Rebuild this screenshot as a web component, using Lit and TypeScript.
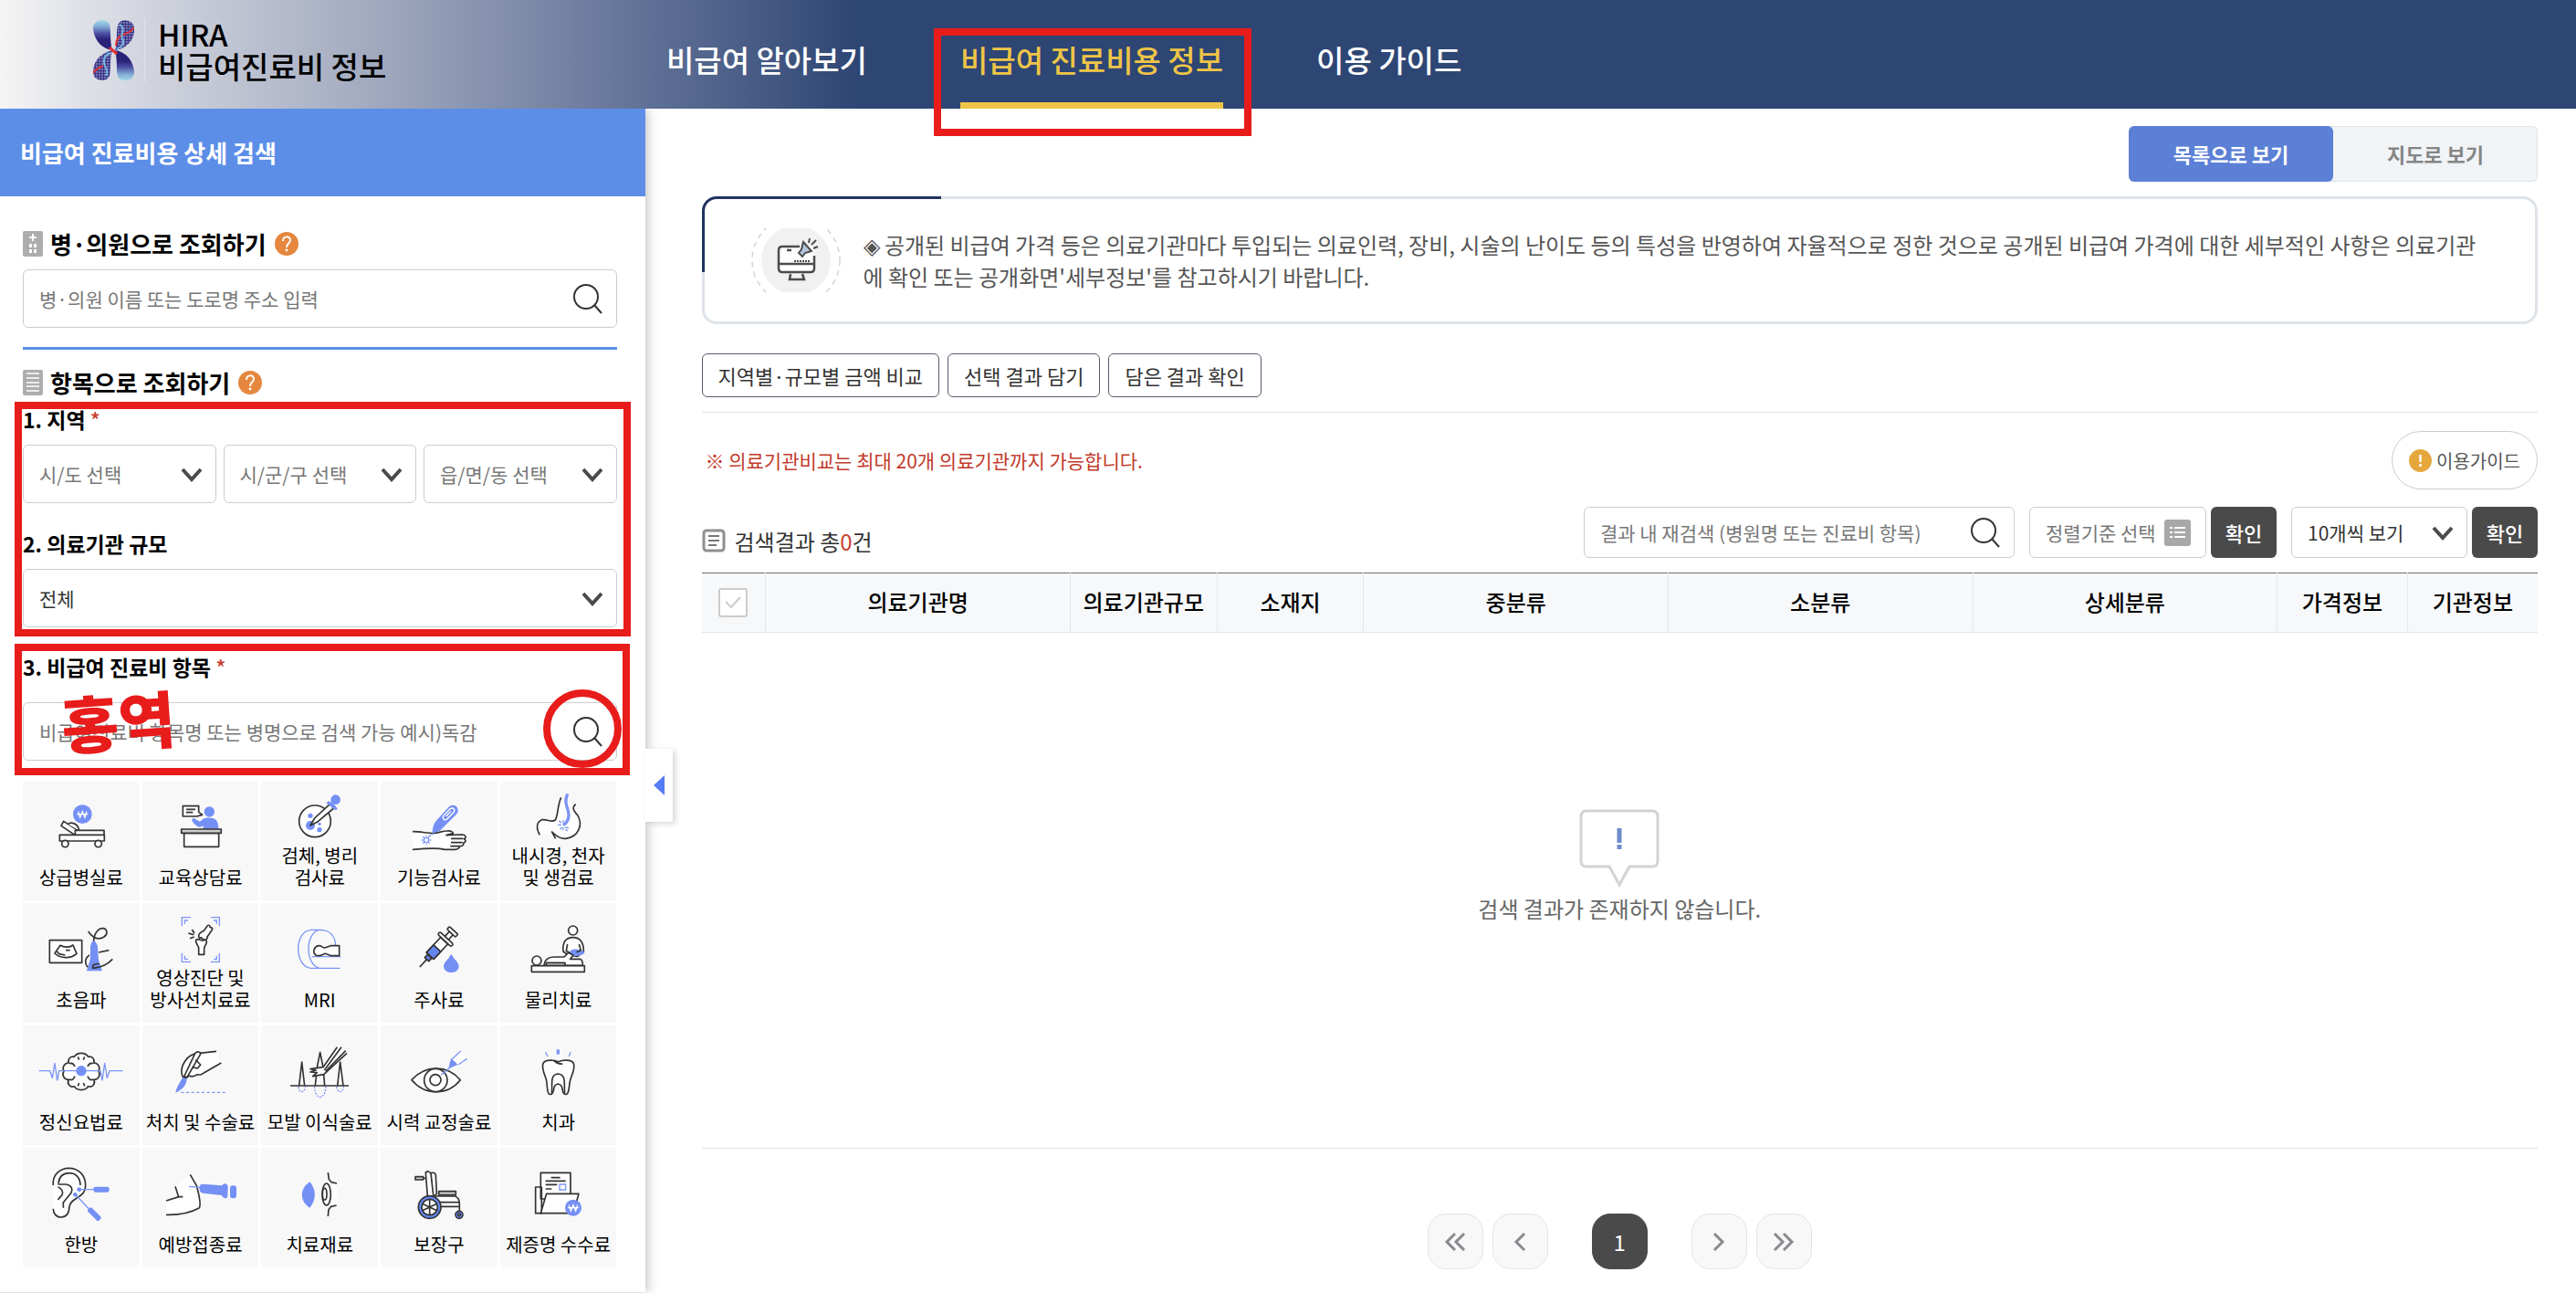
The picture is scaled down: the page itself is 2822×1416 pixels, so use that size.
import { LitElement, html, svg, css } from "lit";
import { customElement, property, state } from "lit/decorators.js";
import { classMap } from "lit/directives/class-map.js";

const won = (x: number, y: number, r: number) => svg`
  <circle class="b" cx=${x} cy=${y} r=${r} />
  <path class="w" transform="translate(${x} ${y})" d="M-14-9l6 19 8-19 8 19 6-19M-18 0h36" />`;

interface Category {
  label: string[];
  box: string;
  art: unknown;
}

const categories: Category[] = [
  {
    label: ["상급병실료"],
    box: "121 105 288 180",
    art: svg`${won(269, 155, 31)}
      <path class="s" d="M207 178l-8 15 46 31 10-15z" /><path class="s" d="M222 188c8-9 32-4 36 20" />
      <path class="s" d="M245 208h95v15h-95zM194 223h147v20H194z" />
      <circle class="s" cx="212" cy="252" r="11" /><circle class="s" cx="321" cy="252" r="11" />`,
  },
  {
    label: ["교육상담료"],
    box: "513 105 288 180",
    art: svg`<path class="s" d="M598 128h52v20l12 9-18 5h-46z" /><path class="s" d="M609 139h30M609 149h22" />
      <circle class="b" cx="685" cy="147" r="17" />
      <path class="b" d="M665 203v-10l-12 5c-12-4-22-14-26-24l5-7 22 12 10-8c12-6 32-6 42 2 8 6 9 20 9 30z" />
      <path class="s" d="M602 217h114v45H602z" /><path class="s g" d="M593 204h131v13H593z" />`,
  },
  {
    label: ["검체, 병리", "검사료"],
    box: "906 69 288 180",
    art: svg`<circle class="s" cx="1035" cy="178" r="52" />
      <circle class="b" cx="1020" cy="160" r="8" /><circle class="b" cx="1020" cy="192" r="15" />
      <circle class="b" cx="1050" cy="187" r="5" /><circle class="b" cx="1050" cy="206" r="8" />
      <path class="s" d="M1020 192l14-24 50-46 13 13-52 44z" />
      <path class="b" d="M1072 118l8-6 11 5 10 9 9 12-8 4z" /><circle class="b" cx="1103" cy="107" r="16" />`,
  },
  {
    label: ["기능검사료"],
    box: "187 105 288 180",
    art: svg`<path class="s" d="M244 212c25 0 45 5 66 6 22-1 30-8 46-8 12-2 22 3 21 8l-22 6 52-2c14 2 14 12 6 14 8 4 6 12-2 13 2 8-4 11-12 11-2 8-8 11-16 11h-34c-20-6-60-4-105 0" />
      <path class="s" d="M370 235h40M370 248h38M368 260h30" />
      <path class="b" d="M309 218c0-22 6-33 14-43l42-46c12-9 29-2 28 14 0 6-3 10-6 13l-50 50c-6 5-14 8-22 9l-9 9z" />
      <path class="w" d="M346 160l20-22c12-8 20 2 12 12l-20 20c-10 8-18-2-12-10zM354 162l16-17" />
      <circle class="bl" cx="289" cy="240" r="8" />
      <path class="bl" d="M289 224v5M289 251v5M273 240h5M300 240h5M278 229l4 4M296 247l4 4M278 251l4-4M304 222l-10 12" />`,
  },
  {
    label: ["내시경, 천자", "및 생검료"],
    box: "579 69 288 180",
    art: svg`<path class="f" d="M728 110l46 12c0 30 20 40 20 70-2 30-30 44-50 44l-40-16-46 0c-10-36 4-50 30-46 20 6 36 6 40-64z" />
      <path class="n" d="M731 100c-13 30-9 56-19 74-14 10-26-4-44-1-18 7-20 28-7 50" />
      <path class="n" d="M779 122c-14 12-6 22 6 36 18 30 6 70-38 77-16 2-30-6-46-22l12 22" />
      <path class="bt" d="M752 88c-10 25-4 35 2 55 5 20 0 38-16 48" />
      <path class="bl" d="M738 174v10M738 198v10M720 190h12M744 198l12 2M724 176l8 8M728 204l6-6M746 204l6 6" />`,
  },
  {
    label: ["초음파"],
    box: "121 507 288 180",
    art: svg`<path class="s" d="M161 569h106v74H161z" />
      <path class="s" d="M196 586c14 8 32 7 42-1l12 28c-20 18-54 17-72-1zM186 606l6 8 20 4M214 602h14" />
      <path class="b" d="M283 670c4-20 12-30 12-48v-34q10-34 24 0l2 36c0 16 10 28 12 46z" />
      <path class="n" d="M306 572c0-24 15-44 32-42 14 3 14 20 2 28-20 12-38 2-52-18" />
      <path class="n" d="M322 609l34-7M368 631c-18 18-32 26-64 30-6-10 8-16 20-14M292 618c-16 10-16 28-6 40" />`,
  },
  {
    label: ["영상진단 및", "방사선치료료"],
    box: "513 471 288 180",
    art: svg`<path class="bl" d="M595 523v-29h29M690 494h28v29M718 611v29h-28M624 640h-29v-29M604 515v-11h11M699 504h10v11M709 620v11h-10M615 631h-11v-11" />
      <path class="s" d="M650 555c0-12 12-14 17-17l10-14c2-6 10-6 10 2 8 0 10 6 5 12l-14 20c2 12-14 12-20 2-4 4-8 0-8-5z" />
      <path class="s" d="M641 568c8-6 14 2 20 2 8 0 16-6 15 6-2 10-8 12-8 20v20h-18v-22c-2-10-12-16-9-26z" />
      <path class="n" d="M616 546l18 5M628 534l8 12M621 563l14-5" />`,
  },
  {
    label: ["MRI"],
    box: "906 507 288 180",
    art: svg`<path class="bl" d="M1022 535c-56 4-56 120 0 126h95M1022 535h28c34 0 52 20 53 52M1050 535c-46 8-50 112 0 126M1025 623h95" />
      <path class="s" d="M1038 618c-12-10-6-28 9-31 9-1 13 7 20 7l20-7h28v33h-26l-20-7c-10 2-16 12-31 5z" />`,
  },
  {
    label: ["주사료"],
    box: "187 507 288 180",
    art: svg`<g transform="translate(326 594) rotate(43)">
        <path class="n" d="M0 52v34" /><path class="s" d="M-8-66H8v26H-8z" />
        <rect class="s" x="-19" y="-78" width="38" height="12" rx="4" />
        <path class="s" d="M-16-32h32v68h-32z" /><path class="s p" d="M-16 2h32v34h-32z" />
        <rect class="s" x="-30" y="-44" width="60" height="11" rx="5" />
        <path class="s p" d="M-9 38H9v14H-9z" /></g>
      <path class="b" d="M371 614c10 20 25 26 25 42a25 19 0 0 1-50 0c0-16 15-22 25-42z" />`,
  },
  {
    label: ["물리치료"],
    box: "579 507 288 180",
    art: svg`<circle class="s" cx="770" cy="537" r="15" />
      <path class="s" d="M738 606c-3-30 8-46 32-46s36 16 35 48l-20 14-30-4z" />
      <path class="b" d="M762 603c16-8 34-4 46 6-2 10-30 14-56 12z" />
      <path class="s" d="M675 652c2-20 14-28 32-28h34l14-14 16 8-10 13h32q10 4 9 21z" />
      <path class="n" d="M752 582l-4 22 14 8M790 582l6 20-14 6" /><path class="s g" d="M682 643h62v10h-62z" />
      <circle class="s" cx="651" cy="636" r="15" /><path class="s" d="M634 653h174v20H634z" />`,
  },
  {
    label: ["정신요법료"],
    box: "121 69 288 180",
    art: svg`<path class="s" d="M224 132a15 15 0 0 1 18-20a26 22 0 0 1 46 0a15 15 0 0 1 18 20a18 18 0 0 1 16 27a18 18 0 0 1-16 28a15 15 0 0 1-18 22a26 22 0 0 1-46 0a15 15 0 0 1-18-22a18 18 0 0 1-16-28a18 18 0 0 1 16-27z" />
      <path class="n" d="M254 112l4 10M276 112l-4 10M254 208l4-10M276 208l-4-10M226 134q12-4 18 10M304 134q-12-4-18 10M226 186q12 6 18-10M304 186q-12 6-18-10" />
      <path class="bl" d="M126 158h36l8 24 8-50 8 58 6-32h136l6 32 8-58 8 50 8-24h44" />
      <circle class="b" cx="265" cy="158" r="17" />`,
  },
  {
    label: ["처치 및 수술료"],
    box: "513 69 288 180",
    art: svg`<path class="f" d="M600 176c-10-40 20-76 50-80l58-2 16 38-60 34z" />
      <path class="n" d="M708 94l-56 6c-40 0-66 44-56 74 4 12 16 8 22 0 12 6 22 0 28-4 12 4 18-4 22-6l56-32" />
      <path class="s" d="M602 177l36-76c6-8 18-6 18 2l-44 76z" /><path class="n" d="M640 122l16 16-10 12-18-4" />
      <path class="b" d="M574 230c2-14 12-30 23-50l14 4c0 18-12 36-37 46z" />
      <path class="bl" stroke-dasharray="9 8" d="M592 229h150" />`,
  },
  {
    label: ["모발 이식술료"],
    box: "906 69 288 180",
    art: svg`<path class="n" d="M954 207h192M983 207l9-78 9 78M1036 207l6-60 10-50 10 50 5 60M1109 207l9-78 10 78" />
      <path class="s" d="M1108 80l-46 66-42 6 18 4-18 6 22 2-14 12 36-6 76-70" />
      <path class="n" d="M1122 80l-56 76M1136 92l-66 68" />
      <path class="bl" stroke-dasharray="6 4" d="M981 210c0 22 22 22 22 0M1034 210c0 46 36 46 36 0M1107 210c0 22 22 22 22 0" />`,
  },
  {
    label: ["시력 교정술료"],
    box: "187 69 288 180",
    art: svg`<path class="s" d="M241 188c44-50 118-50 160 0-42 52-116 52-160 0z" />
      <circle class="s" cx="320" cy="189" r="38" /><circle class="s" cx="319" cy="188" r="18" />
      <path class="bl" d="M338 172l32-28" /><path class="b" d="M362 151l8-34 24 20z" />
      <path class="f" d="M376 117l26-24 22 25-30 22z" /><path class="bl" d="M374 119l28-26M394 138l29-20" />`,
  },
  {
    label: ["치과"],
    box: "579 69 288 180",
    art: svg`<path class="s" d="M722 128c-14-6-42-8-50 5-6 16 4 36 10 52 4 18 2 36 8 48 8 6 14 0 16-10 2-14 4-20 15-22 11 2 13 8 15 22 2 10 8 16 16 10 8-14 4-30 10-48 6-16 16-36 10-52-8-13-36-11-50-5z" />
      <path class="n" d="M700 232c4-24-8-62 21-64 30 2 18 40 22 64M708 125c8 8 18 12 28 10" />
      <path class="bt" d="M721 88v16" /><path class="bl" d="M680 97l7 14M763 97l-7 14" />`,
  },
  {
    label: ["한방"],
    box: "121 471 288 180",
    art: svg`<path class="f" d="M173 530c0-70 106-70 106 4 0 40-50 40-54 70-2 50-52 40-52 8z" />
      <path class="n" d="M173 534c-4-32 20-56 52-56s54 24 54 56c0 44-50 40-53 70-1 24-12 35-27 35-16 0-26-12-26-28" />
      <path class="n" d="M190 528c2-20 14-34 36-34s36 16 36 40M188 531h28c18 4 22 16 16 28l-28 34M188 540c10 2 20 14 14 26l-14 16M206 592v16" />
      <path class="bl" d="M258 548h50M246 565l44 46" /><circle class="b" cx="258" cy="548" r="7" /><circle class="b" cx="245" cy="565" r="7" />
      <rect class="b" x="305" y="539" width="52" height="18" rx="7" />
      <rect class="b" x="-26" y="-9" width="52" height="18" rx="7" transform="translate(308 629) rotate(45)" />`,
  },
  {
    label: ["예방접종료"],
    box: "513 471 288 180",
    art: svg`<path class="f" d="M543 584l40-12-10-34 48-36 22 40 12 62-22 16-90 10z" />
      <path class="n" d="M573 538l11 34h14M543 585l42-13M543 631c40 1 76-4 108-22 10-10-2-50-8-74l-21-36" />
      <path class="bl" d="M618 538l38 3" />
      <path class="b" d="M653 540q0-9 10-10l64 5q2-7 10-6t9 10l-1 30q-1 8-9 8-8-1-10-10l-62-7q-10-1-11-10z" />
      <rect class="b" x="753" y="535" width="21" height="42" rx="9" />`,
  },
  {
    label: ["치료재료"],
    box: "906 471 288 180",
    art: svg`<path class="b" d="M1018 523c22 24 22 60 0 85-34-20-34-64 0-85z" />
      <path class="f" d="M1080 522l28 8v68l-28 8z" />
      <path class="n" d="M1078 492l3 22 8 10 18 4M1078 636l2-22 8-10 18-4" />
      <ellipse class="s" cx="1073" cy="564" rx="14" ry="36" /><ellipse class="s" cx="1067" cy="563" rx="7" ry="19" />`,
  },
  {
    label: ["보장구"],
    box: "187 471 288 180",
    art: svg`<path class="s g" d="M253 506h26v10h-26z" />
      <path class="n" d="M279 511h14" /><path class="s" d="M304 494q14-4 16 6l3 62-14 12z" />
      <path class="s" d="M287 492q10-8 17 4l10 88h-20z" />
      <path class="s" d="M318 570h66q14 6 14 24v28M316 590h82M316 604h82" />
      <path class="s g" d="M330 554h56v12h-56z" />
      <circle class="s p" cx="300" cy="606" r="37" /><circle class="s" cx="300" cy="606" r="26" />
      <path class="n" d="M300 580v52M276 595l48 22M276 617l48-22" />
      <circle class="s p" cx="397" cy="631" r="12" /><circle class="s" cx="397" cy="631" r="4" />`,
  },
  {
    label: ["제증명 수수료"],
    box: "579 471 288 180",
    art: svg`<path class="s" d="M647 540h20v86h-20zM664 493h98v86h-98z" />
      <path class="n" d="M698 509h30M680 520h66M680 532h38M680 546h20" />
      <path class="bl" d="M726 531h20v18h-20z" /><path class="s" d="M683 562h106l-18 64H664z" />
      ${won(771, 608, 27)}`,
  },
];

const base = css`
  *,
  *::before,
  *::after {
    box-sizing: border-box;
  }
  svg {
    display: block;
    flex: none;
  }
  a {
    color: inherit;
    text-decoration: none;
  }
  button,
  input,
  select {
    margin: 0;
    font: inherit;
    color: inherit;
  }
  button {
    cursor: pointer;
    padding: 0;
  }
  h1,
  h2,
  p {
    margin: 0;
  }
`;

const magnifier = html`<svg width="34" height="34" viewBox="0 0 34 34" fill="none" stroke="#333" stroke-width="2" aria-hidden="true">
  <circle cx="15" cy="15" r="13" /><path d="M24 24l8 9" />
</svg>`;

@customElement("select-box")
class SelectBox extends LitElement {
  @property() label = "";
  @property({ type: Array }) options: string[] = [];
  @property({ type: Boolean, reflect: true }) muted = false;

  static styles = [
    base,
    css`
      :host {
        display: block;
        position: relative;
        min-width: 0;
      }
      .field {
        display: block;
        width: 100%;
        height: 100%;
        appearance: none;
        border: 1px solid #ccc;
        border-radius: 6px;
        background: #fff;
        padding: 0 48px 0 17px;
        color: #333;
      }
      :host([muted]) .field {
        color: #777;
      }
      .chevron {
        position: absolute;
        right: 15px;
        top: 50%;
        margin-top: -7px;
        pointer-events: none;
      }
    `,
  ];

  render() {
    return html`<select class="field" aria-label=${this.label}>
        ${this.options.map((o) => html`<option>${o}</option>`)}
      </select>
      <svg class="chevron" width="24" height="16" viewBox="0 0 24 16" fill="none" stroke="#4a4a4a" stroke-width="4" aria-hidden="true">
        <path d="M2 2l10 11L22 2" />
      </svg>`;
  }
}

@customElement("page-header")
class PageHeader extends LitElement {
  static styles = [
    base,
    css`
      :host {
        display: flex;
        height: 119px;
        background: linear-gradient(90deg, #f5f5f5 0, #dddfe6 100px, #a3abc0 400px, #5e6f95 720px, #2e4674 940px);
      }
      .brand {
        display: flex;
        align-items: flex-start;
        flex: 0 0 730px;
        padding: 20px 0 0 102px;
        color: #000;
      }
      .mark {
        margin-top: 1px;
      }
      .name {
        margin-left: 11px;
        padding-left: 14px;
        border-left: 1px solid #dfe2ea;
        font-size: 33px;
        line-height: 35px;
        font-weight: 500;
      }
      .name span {
        display: block;
      }
      .nav {
        display: flex;
        gap: 102px;
        font-size: 33px;
        line-height: 48px;
        font-weight: 500;
        color: #fff;
      }
      .link {
        padding-top: 41px;
        position: relative;
      }
      .current {
        color: #efc547;
        border-bottom: 7px solid #efc547;
      }
      .frame {
        position: absolute;
        inset: 31px -31px -37px -29px;
        border: 8px solid #e71c1b;
        pointer-events: none;
      }
    `,
  ];

  render() {
    return html`
      <a class="brand" href="#home">
        <svg class="mark" width="45" height="68" viewBox="0 0 45 68" aria-hidden="true">
          <defs>
            <linearGradient id="up" x1="0" y1="0" x2="0" y2="1">
              <stop offset="0" stop-color="#a4d8ea" /><stop offset=".2" stop-color="#82aed6" />
              <stop offset=".45" stop-color="#4b4da0" /><stop offset=".65" stop-color="#2a2178" />
            </linearGradient>
            <linearGradient id="down" x1="0" y1="1" x2="0" y2="0">
              <stop offset="0" stop-color="#a4d8ea" /><stop offset=".2" stop-color="#82aed6" />
              <stop offset=".45" stop-color="#4b4da0" /><stop offset=".65" stop-color="#2a2178" />
            </linearGradient>
            <pattern id="net" width="3" height="3" patternUnits="userSpaceOnUse">
              <rect width="3" height="3" fill="#3b3486" /><circle cx="1" cy="1" r="1" fill="#8b8fc4" />
            </pattern>
          </defs>
          <path d="M0 10C0 0 15-2 18 6c2 8 0 17 3 28C8 32 1 22 0 10z" fill="url(#up)" />
          <path d="M45 58c0 11-15 12-18 4-2-8 0-16-3-28 13 2 20 12 21 24z" fill="url(#down)" />
          <path d="M27 7c2-9 17-7 18 2 1 14-8 23-21 25 3-10 1-18 3-27z" fill="url(#net)" />
          <path d="M18 62c-3 8-18 6-18-4 0-13 9-21 21-24-3 10-1 19-3 28z" fill="url(#net)" />
          <path d="M45 9c-4 6-8 6-12 8-6 2-8 6-8 12M0 59c4-6 8-6 11-8" fill="none" stroke="#e03434" stroke-width="2" />
          <path d="M29 6c8 4 0 10 3 15s0 9-6 12M19 37c-8 4-7 6-7 11s6 7 2 14" fill="none" stroke="#74b6dc" stroke-width="2" />
          <path d="M18 31l8 7" stroke="#e03434" stroke-width="3" />
        </svg>
        <span class="name"><span>HIRA</span><span>비급여진료비 정보</span></span>
      </a>
      <nav class="nav">
        <a class="link" href="#about">비급여 알아보기</a>
        <a class="link current" href="#cost" aria-current="page">비급여 진료비용 정보<span class="frame"></span></a>
        <a class="link" href="#guide">이용 가이드</a>
      </nav>
    `;
  }
}

@customElement("search-panel")
class SearchPanel extends LitElement {
  static styles = [
    base,
    css`
      :host {
        display: block;
        position: relative;
        background: #fff;
        border-bottom: 1px solid #e3e3e3;
        box-shadow: 2px 0 12px rgba(0, 0, 0, 0.25);
        font-size: 21px;
      }
      .banner {
        display: flex;
        align-items: center;
        height: 96px;
        padding: 0 0 2px 22px;
        background: #5c8ee8;
        color: #fff;
        font-size: 26px;
        font-weight: 700;
      }
      .body {
        display: flex;
        flex-direction: column;
        padding: 38px 31px 27px 25px;
      }
      .title {
        display: flex;
        align-items: center;
        height: 28px;
        font-size: 26px;
        font-weight: 700;
        color: #000;
      }
      .title .help {
        margin-left: 9px;
      }
      .title .kind {
        margin-right: 8px;
      }
      .text {
        padding-bottom: 2px;
      }
      .search {
        position: relative;
        display: flex;
        height: 64px;
      }
      .input {
        flex: 1;
        min-width: 0;
        border: 1px solid #ccc;
        border-radius: 6px;
        padding: 0 64px 0 17px;
        background: #fff;
      }
      .input::placeholder {
        color: #777;
        opacity: 1;
      }
      .go {
        position: absolute;
        right: 15px;
        top: 15px;
        border: 0;
        background: none;
      }
      .rule {
        height: 3px;
        margin: 21px 0 22px;
        background: #5c8ee8;
      }
      .label {
        display: block;
        font-size: 23px;
        line-height: 24px;
        font-weight: 700;
        color: #000;
      }
      .must {
        color: #c8402f;
        font-weight: 500;
      }
      .gap {
        margin-top: 14px;
      }
      .wide {
        margin-top: 16px;
      }
      .marked {
        position: relative;
        display: flex;
        flex-direction: column;
      }
      .scope {
        margin-top: 14px;
      }
      .item {
        margin-top: 31px;
        gap: 27px;
      }
      .regions {
        display: grid;
        grid-template-columns: repeat(3, 1fr);
        gap: 8px;
        margin: 16px 0 32px;
      }
      .select {
        height: 64px;
      }
      .frame {
        position: absolute;
        inset: -7px -15px -10px -9px;
        border: 8px solid #e71c1b;
        pointer-events: none;
      }
      .item .frame {
        inset: -13px -14px -16px -9px;
      }
      .ring {
        position: absolute;
        right: -5px;
        top: -14px;
        width: 86px;
        height: 86px;
        border: 8px solid #e71c1b;
        border-radius: 50%;
        pointer-events: none;
      }
      .note {
        position: absolute;
        left: 42px;
        top: 30px;
        font-size: 68px;
        line-height: 80px;
        font-weight: 900;
        color: #e71c1b;
        transform: rotate(-4deg);
        pointer-events: none;
      }
      .grid {
        display: grid;
        grid-template-columns: repeat(5, 1fr);
        gap: 3px;
        margin-top: 22px;
      }
      .tile {
        display: flex;
        flex-direction: column;
        align-items: center;
        height: 131px;
        padding: 5px 0 13px;
        border: 0;
        background: #f8f8f8;
        color: #000;
        font-size: 20px;
        line-height: 24px;
        white-space: nowrap;
      }
      .pic {
        flex: 1;
        display: flex;
        align-items: center;
        min-height: 0;
      }
      .tile span span {
        display: block;
      }
      .s {
        fill: #fff;
        stroke: #333;
        stroke-width: 5;
        stroke-linejoin: round;
      }
      .n {
        fill: none;
        stroke: #333;
        stroke-width: 5;
        stroke-linejoin: round;
      }
      .g {
        fill: #ccc;
      }
      .p {
        fill: #6585ee;
      }
      .f {
        fill: #fff;
      }
      .b {
        fill: #7590f5;
      }
      .bl {
        fill: none;
        stroke: #7c95f5;
        stroke-width: 4;
      }
      .bt {
        fill: none;
        stroke: #7c95f5;
        stroke-width: 10;
      }
      .w {
        fill: none;
        stroke: #fff;
        stroke-width: 4;
      }
      .fold {
        position: absolute;
        left: 100%;
        top: 701px;
        width: 30px;
        height: 80px;
        display: grid;
        place-items: center;
        border: 0;
        background: #fff;
        box-shadow: 3px 2px 6px rgba(0, 0, 0, 0.16);
      }
    `,
  ];

  private help() {
    return html`<svg class="help" width="26" height="26" viewBox="0 0 26 26" role="img" aria-label="도움말">
      <circle cx="13" cy="13" r="13" fill="#e5873f" />
      <path d="M9 10c0-6 8-6 8-1 0 4-4 3-4 8" fill="none" stroke="#fff" stroke-width="2" />
      <circle cx="13" cy="20" r="1.4" fill="#fff" />
    </svg>`;
  }

  render() {
    return html`
      <h1 class="banner">비급여 진료비용 상세 검색</h1>
      <div class="body">
        <h2 class="title">
          <svg class="kind" width="22" height="28" viewBox="0 0 22 28" aria-hidden="true">
            <rect width="22" height="28" rx="2" fill="#adadad" />
            <path d="M11 3v8M7 7h8" stroke="#fff" stroke-width="2" />
            <path d="M7 14h3v4H7zM12 14h3v4h-3zM7 20h3v4H7zM12 20h3v4h-3z" fill="#fff" />
          </svg>
          <label class="text" for="hospital">병·의원으로 조회하기</label>${this.help()}
        </h2>
        <div class="search gap">
          <input class="input" id="hospital" placeholder="병·의원 이름 또는 도로명 주소 입력" />
          <button class="go" aria-label="검색">${magnifier}</button>
        </div>
        <div class="rule"></div>
        <h2 class="title">
          <svg class="kind" width="22" height="28" viewBox="0 0 22 28" aria-hidden="true">
            <rect width="22" height="28" rx="2" fill="#adadad" />
            <path d="M4 4h14M4 9h14M4 14h14M4 18h14M4 23h14" stroke="#fff" stroke-width="1.5" />
          </svg>
          <span class="text">항목으로 조회하기</span>${this.help()}
        </h2>
        <div class="marked scope">
          <span class="label">1. 지역 <span class="must">*</span></span>
          <div class="regions">
            <select-box class="select" muted label="시/도" .options=${["시/도 선택"]}></select-box>
            <select-box class="select" muted label="시/군/구" .options=${["시/군/구 선택"]}></select-box>
            <select-box class="select" muted label="읍/면/동" .options=${["읍/면/동 선택"]}></select-box>
          </div>
          <span class="label">2. 의료기관 규모</span>
          <select-box class="select wide" label="의료기관 규모" .options=${["전체"]}></select-box>
          <span class="frame"></span>
        </div>
        <div class="marked item">
          <label class="label" for="item">3. 비급여 진료비 항목 <span class="must">*</span></label>
          <div class="search">
            <input class="input" id="item" placeholder="비급여진료비 항목명 또는 병명으로 검색 가능 예시)독감" />
            <button class="go" aria-label="항목 검색">${magnifier}</button>
            <span class="ring"></span>
          </div>
          <span class="frame"></span>
          <span class="note">홍역</span>
        </div>
        <div class="grid">
          ${categories.map(
            (c) => html`<button class="tile">
              <span class="pic"><svg width="96" height="60" viewBox=${c.box} aria-hidden="true">${c.art}</svg></span>
              <span>${c.label.map((line) => html`<span>${line}</span>`)}</span>
            </button>`
          )}
        </div>
      </div>
      <button class="fold" aria-label="검색창 접기">
        <svg width="12" height="22" viewBox="0 0 12 22" aria-hidden="true"><path d="M12 0v22L0 11z" fill="#557df5" /></svg>
      </button>
    `;
  }
}

@customElement("result-panel")
class ResultPanel extends LitElement {
  @state() private view = "list";

  static styles = [
    base,
    css`
      :host {
        display: flex;
        flex-direction: column;
        min-width: 0;
        padding: 19px 42px 24px 62px;
        color: #333;
      }
      .tabs {
        align-self: flex-end;
        display: flex;
        width: 448px;
        height: 61px;
        border-radius: 6px;
        background: #f1f4f7;
        box-shadow: inset 0 0 0 1px #dfe4e9;
        font-size: 22px;
        font-weight: 700;
      }
      .tab {
        flex: 1;
        border: 0;
        border-radius: 6px;
        background: none;
        color: #858585;
        padding-bottom: 2px;
      }
      .on {
        background: #5c80d6;
        color: #fff;
      }
      .notice {
        position: relative;
        display: flex;
        align-items: center;
        gap: 25px;
        min-height: 140px;
        margin-top: 16px;
        padding: 0 62px 0 51px;
        border: 3px solid #dde3e8;
        border-radius: 16px;
        font-size: 24px;
        line-height: 35px;
        color: #555;
      }
      .notice::before {
        content: "";
        position: absolute;
        left: -3px;
        top: -3px;
        width: 262px;
        height: 83px;
        border: solid #22335f;
        border-width: 3px 0 0 3px;
        border-top-left-radius: 16px;
      }
      .actions {
        display: flex;
        gap: 9px;
        margin-top: 32px;
        padding-bottom: 16px;
        border-bottom: 1px solid #e5e5e5;
        font-size: 22px;
      }
      .action {
        height: 48px;
        padding: 0 17px 1px;
        border: 1px solid #555b6b;
        border-radius: 6px;
        background: #fff;
      }
      .row {
        display: flex;
        align-items: center;
        justify-content: space-between;
      }
      .hint {
        margin-top: 20px;
        padding-left: 4px;
        font-size: 21px;
        color: #c23a2b;
      }
      .guide {
        display: flex;
        align-items: center;
        gap: 5px;
        height: 64px;
        padding: 0 18px;
        border: 1px solid #ccc;
        border-radius: 32px;
        background: #fff;
        color: #555;
        font-size: 20px;
      }
      .tools {
        margin-top: 19px;
        font-size: 21px;
      }
      .count {
        display: flex;
        align-items: center;
        gap: 10px;
        padding-top: 18px;
        font-size: 24px;
      }
      .num {
        color: #c8402f;
      }
      .controls {
        display: flex;
        gap: 16px;
        height: 56px;
      }
      .pair {
        display: flex;
        gap: 5px;
      }
      .search {
        position: relative;
        display: flex;
        width: 472px;
      }
      .input {
        flex: 1;
        min-width: 0;
        border: 1px solid #ccc;
        border-radius: 6px;
        padding: 0 56px 0 17px;
      }
      .input::placeholder {
        color: #777;
        opacity: 1;
      }
      .go {
        position: absolute;
        right: 15px;
        top: 11px;
        border: 0;
        background: none;
      }
      .sort {
        display: flex;
        align-items: center;
        justify-content: space-between;
        width: 194px;
        padding: 0 16px 0 17px;
        border: 1px solid #ccc;
        border-radius: 6px;
        background: #fff;
        color: #777;
      }
      .size {
        width: 193px;
      }
      .ok {
        width: 72px;
        border: 0;
        border-radius: 6px;
        background: #4a4a4a;
        color: #fff;
        font-size: 22px;
        font-weight: 500;
      }
      .table {
        width: 100%;
        margin-top: 16px;
        border-collapse: collapse;
        table-layout: fixed;
        font-size: 24px;
      }
      .th {
        height: 65px;
        padding: 0;
        border-top: 1px solid #666a70;
        border-bottom: 1px solid #e2e5e8;
        border-right: 1px solid #e5e8eb;
        background: #f6f8fa;
        color: #000;
        font-weight: 500;
        line-height: 32px;
      }
      .name {
        padding-bottom: 2px;
      }
      .th:last-child {
        border-right: 0;
      }
      .c0 {
        width: 3.5%;
      }
      .c1 {
        width: 16.6%;
      }
      .c2 {
        width: 8%;
      }
      .c3 {
        width: 7.1%;
      }
      .check {
        display: block;
        position: relative;
        width: 32px;
        height: 32px;
        margin: 0 auto;
      }
      .tick {
        appearance: none;
        display: block;
        width: 32px;
        height: 32px;
        border: 2px solid #ccc;
        border-radius: 3px;
        background: #fff;
      }
      .check svg {
        position: absolute;
        left: 6px;
        top: 8px;
        pointer-events: none;
      }
      .td {
        height: 565px;
        padding: 0 0 51px;
        border-bottom: 1px solid #e2e2e2;
        color: #666;
      }
      .empty {
        display: flex;
        flex-direction: column;
        align-items: center;
        gap: 5px;
        line-height: 36px;
      }
      .pages {
        display: flex;
        justify-content: center;
        gap: 48px;
        margin-top: 71px;
      }
      .step {
        display: flex;
        gap: 10px;
      }
      .page {
        display: grid;
        place-items: center;
        width: 61px;
        height: 61px;
        border: 1px solid #e5e5e5;
        border-radius: 20px;
        background: #f8f8f8;
      }
      .now {
        background: #4a4a4a;
        border-color: #4a4a4a;
        color: #fff;
        font-size: 24px;
      }
    `,
  ];

  private tab(id: string, text: string) {
    return html`<button class=${classMap({ tab: true, on: this.view === id })} @click=${() => (this.view = id)}>${text}</button>`;
  }

  private page(label: string, d: string) {
    return html`<button class="page" aria-label=${label}>
      <svg width="24" height="20" viewBox="0 0 24 20" fill="none" stroke="#8a8a90" stroke-width="3" aria-hidden="true"><path d=${d} /></svg>
    </button>`;
  }

  render() {
    const columns: [string, string][] = [
      ["c1", "의료기관명"],
      ["c2", "의료기관규모"],
      ["c2", "소재지"],
      ["c1", "중분류"],
      ["c1", "소분류"],
      ["c1", "상세분류"],
      ["c3", "가격정보"],
      ["c3", "기관정보"],
    ];
    return html`
      <div class="tabs">${this.tab("list", "목록으로 보기")}${this.tab("map", "지도로 보기")}</div>
      <div class="notice">
        <svg width="98" height="70" viewBox="0 0 98 70" aria-hidden="true">
          <circle cx="49" cy="35" r="48" fill="none" stroke="#d3d5dc" stroke-width="1.5" stroke-dasharray="6 5" />
          <circle cx="49" cy="35" r="38" fill="#f1f1f1" />
          <path d="M30 20h39v27H30z" fill="#fff" />
          <g fill="none" stroke="#4c4c4c" stroke-width="2.5">
            <path d="M53 20H34q-4 0-4 4v20q0 4 4 4h31q4 0 4-4V30M30 39h39M43 50l-1 6h16l-2-6M39 24h5" />
            <path d="M47 36h17" stroke-width="2" stroke-dasharray="2 1" />
            <path d="M57 15l9 10-7 2-3 4-4-4 3-4z" fill="#b4c6de" stroke-width="2" />
            <path d="M63 16l1-5M66 18l5-5M68 22l5-2" stroke-width="2" />
          </g>
        </svg>
        <p>
          ◈ 공개된 비급여 가격 등은 의료기관마다 투입되는 의료인력, 장비, 시술의 난이도 등의 특성을 반영하여 자율적으로 정한
          것으로 공개된 비급여 가격에 대한 세부적인 사항은 의료기관에 확인 또는 공개화면'세부정보'를 참고하시기 바랍니다.
        </p>
      </div>
      <div class="actions">
        <button class="action">지역별·규모별 금액 비교</button>
        <button class="action">선택 결과 담기</button>
        <button class="action">담은 결과 확인</button>
      </div>
      <div class="row hint">
        <p>※ 의료기관비교는 최대 20개 의료기관까지 가능합니다.</p>
        <button class="guide">
          <svg width="25" height="25" viewBox="0 0 25 25" aria-hidden="true">
            <circle cx="12.5" cy="12.5" r="12.5" fill="#e5a73c" />
            <path d="M12.5 6v8M12.5 16v3" stroke="#fff" stroke-width="2.5" />
          </svg>
          이용가이드
        </button>
      </div>
      <div class="row tools">
        <p class="count">
          <svg width="26" height="26" viewBox="0 0 26 26" aria-hidden="true">
            <rect x="2" y="2" width="22" height="22" rx="3" fill="#fff" stroke="#8f8f8f" stroke-width="3" />
            <path d="M7 8h12M7 13h12M7 18h9" stroke="#777" stroke-width="2" />
          </svg>
          <span>검색결과 총<span class="num">0</span>건</span>
        </p>
        <div class="controls">
          <div class="search">
            <input class="input" aria-label="결과 내 재검색" placeholder="결과 내 재검색 (병원명 또는 진료비 항목)" />
            <button class="go" aria-label="재검색">${magnifier}</button>
          </div>
          <div class="pair">
            <button class="sort">
              정렬기준 선택
              <svg width="29" height="29" viewBox="0 0 29 29" aria-hidden="true">
                <rect width="29" height="29" rx="3" fill="#a8a8a8" />
                <path d="M6 9h3M11 9h12M6 14h3M11 14h12M6 19h3M11 19h12" stroke="#fff" stroke-width="2" />
              </svg>
            </button>
            <button class="ok">확인</button>
          </div>
          <div class="pair">
            <select-box class="size" label="표시 개수" .options=${["10개씩 보기"]}></select-box>
            <button class="ok">확인</button>
          </div>
        </div>
      </div>
      <table class="table">
        <thead>
          <tr>
            <th class="th c0">
              <span class="check">
                <input class="tick" type="checkbox" aria-label="전체 선택" />
                <svg width="20" height="16" viewBox="0 0 20 16" fill="none" stroke="#ccc" stroke-width="2" aria-hidden="true">
                  <path d="M2 7l6 6L18 2" />
                </svg>
              </span>
            </th>
            ${columns.map(([size, text]) => html`<th class="th name ${size}">${text}</th>`)}
          </tr>
        </thead>
        <tbody>
          <tr>
            <td class="td" colspan="9">
              <div class="empty">
                <svg width="88" height="86" viewBox="0 0 88 86" fill="none" aria-hidden="true">
                  <path d="M8 2h72q6 0 6 6v49q0 6-6 6H55L44 83 33 63H8q-6 0-6-6V8q0-6 6-6z" stroke="#d3d3d3" stroke-width="3" />
                  <path d="M44 21v16M44 39v5" stroke="#6f8cc9" stroke-width="5" />
                </svg>
                <p>검색 결과가 존재하지 않습니다.</p>
              </div>
            </td>
          </tr>
        </tbody>
      </table>
      <nav class="pages" aria-label="페이지">
        <div class="step">${this.page("처음", "M12 1L3 10l9 9M22 1l-9 9 9 9")}${this.page("이전", "M17 1l-9 9 9 9")}</div>
        <button class="page now" aria-current="page">1</button>
        <div class="step">${this.page("다음", "M7 1l9 9-9 9")}${this.page("마지막", "M2 1l9 9-9 9M12 1l9 9-9 9")}</div>
      </nav>
    `;
  }
}

@customElement("app-root")
class AppRoot extends LitElement {
  static styles = [
    base,
    css`
      :host {
        display: block;
        font-family: "Noto Sans CJK KR", "Noto Sans", sans-serif;
        background: #fff;
        color: #333;
      }
      .page {
        display: grid;
        grid-template-columns: calc(25% + 1px) minmax(0, 1fr);
        align-items: start;
      }
      .side {
        z-index: 1;
      }
      .top {
        position: relative;
        z-index: 2;
      }
    `,
  ];

  render() {
    return html`
      <page-header class="top"></page-header>
      <main class="page">
        <search-panel class="side"></search-panel>
        <result-panel></result-panel>
      </main>
    `;
  }
}
